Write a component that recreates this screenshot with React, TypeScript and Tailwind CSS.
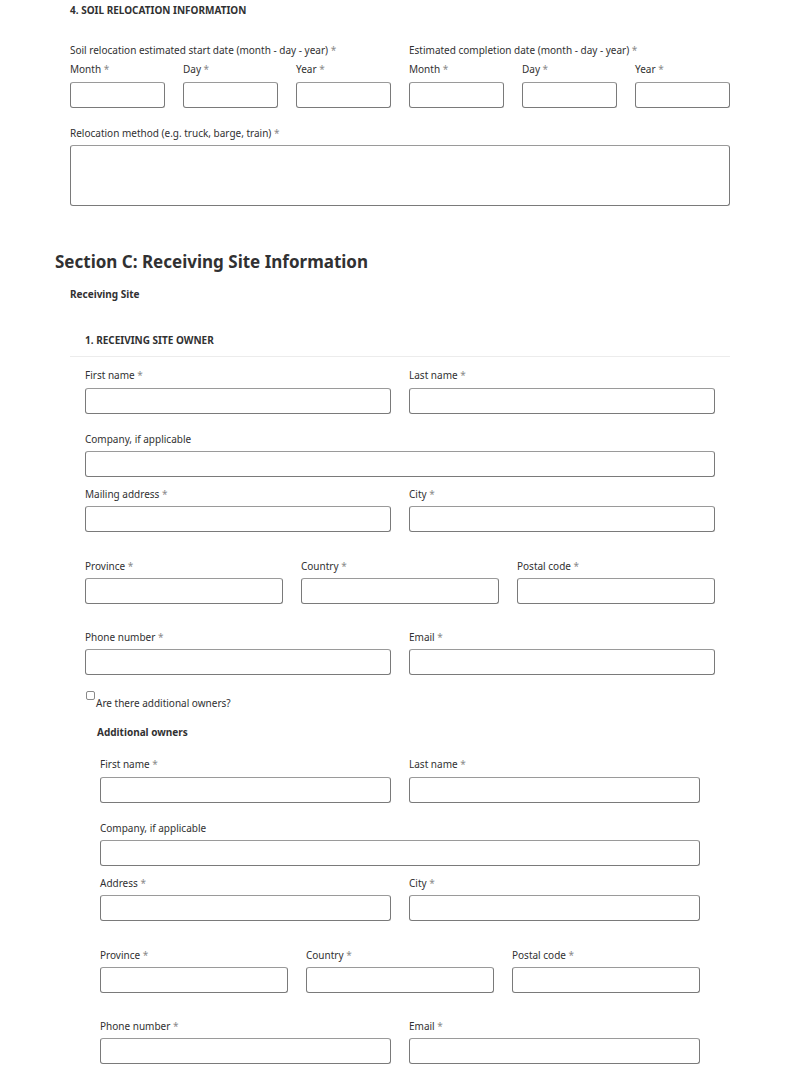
import React from "react";

const font = { fontFamily: '"Noto Sans", "Open Sans", sans-serif' };

function Label({ text, req = true }: { text: string; req?: boolean }) {
  return (
    <div className="text-[10px] leading-[14px] text-[#313132] whitespace-nowrap">
      {text}
      {req && <span className="text-[#8a8a8a]"> *</span>}
    </div>
  );
}

function Input({ h = "h-[26px]" }: { h?: string }) {
  return (
    <div
      className={`${h} w-full rounded-[3px] border border-[#7a7a7a] border-t-[#9a9a9a] bg-white`}
    />
  );
}

function Field({ text, req = true, mt = "mt-[6px]" }: { text: string; req?: boolean; mt?: string }) {
  return (
    <div className="flex flex-col">
      <Label text={text} req={req} />
      <div className={mt}>
        <Input />
      </div>
    </div>
  );
}

function OwnerBlock({ address }: { address: string }) {
  return (
    <>
      <div className="grid grid-cols-2 gap-x-[18px]">
        <Field text="First name" />
        <Field text="Last name" />
      </div>
      <div className="mt-[18px]">
        <Field text="Company, if applicable" req={false} mt="mt-[5px]" />
      </div>
      <div className="mt-[10px] grid grid-cols-2 gap-x-[18px]">
        <Field text={address} mt="mt-[5px]" />
        <Field text="City" mt="mt-[5px]" />
      </div>
      <div className="mt-[27px] grid grid-cols-3 gap-x-[18px]">
        <Field text="Province" mt="mt-[5px]" />
        <Field text="Country" mt="mt-[5px]" />
        <Field text="Postal code" mt="mt-[5px]" />
      </div>
      <div className="mt-[26px] grid grid-cols-2 gap-x-[18px]">
        <Field text="Phone number" mt="mt-[5px]" />
        <Field text="Email" mt="mt-[5px]" />
      </div>
    </>
  );
}

function DateGroup({ title }: { title: string }) {
  return (
    <div className="flex flex-col">
      <Label text={title} />
      <div className="mt-[5px] grid grid-cols-3 gap-x-[18px]">
        <Field text="Month" />
        <Field text="Day" />
        <Field text="Year" />
      </div>
    </div>
  );
}

export default function App() {
  return (
    <div className="w-[800px] h-[1074px] overflow-hidden bg-white" style={font}>
      <div className="pl-[55px] pr-[70px]">
        <div className="pl-[15px]">
          <div className="pt-[3px] text-[10px] leading-[14px] font-bold text-[#313132] uppercase">
            4. Soil relocation information
          </div>
          <div className="mt-[26px] grid grid-cols-2 gap-x-[18px]">
            <DateGroup title="Soil relocation estimated start date (month - day - year)" />
            <DateGroup title="Estimated completion date (month - day - year)" />
          </div>
          <div className="mt-[18px]">
            <Label text="Relocation method (e.g. truck, barge, train)" />
            <div className="mt-[5px]">
              <Input h="h-[61px]" />
            </div>
          </div>
        </div>

        <div className="mt-[44px] text-[17px] leading-[24px] font-bold text-[#313132]">
          Section C: Receiving Site Information
        </div>

        <div className="pl-[15px]">
          <div className="mt-[13px] text-[10px] leading-[14px] font-bold text-[#313132]">
            Receiving Site
          </div>

          <div className="mt-[32px] border-b border-[#ececec] pb-[9px] pl-[15px] text-[10px] leading-[14px] font-bold uppercase text-[#313132]">
            1. Receiving site owner
          </div>

          <div className="px-[15px] pt-[11px]">
            <OwnerBlock address="Mailing address" />

            <div className="mt-[15px] flex items-start">
              <span className="mt-[1px] ml-[1px] block h-[9px] w-[9px] rounded-[2px] border border-[#8a8a8a] bg-white" />
              <span className="mt-[6px] ml-[1px] text-[10px] leading-[14px] text-[#313132]">
                Are there additional owners?
              </span>
            </div>

            <div className="mt-[15px] pl-[12px] text-[10px] leading-[14px] font-bold text-[#313132]">
              Additional owners
            </div>

            <div className="mt-[18px] px-[15px]">
              <OwnerBlock address="Address" />
            </div>
          </div>
        </div>
      </div>
    </div>
  );
}
